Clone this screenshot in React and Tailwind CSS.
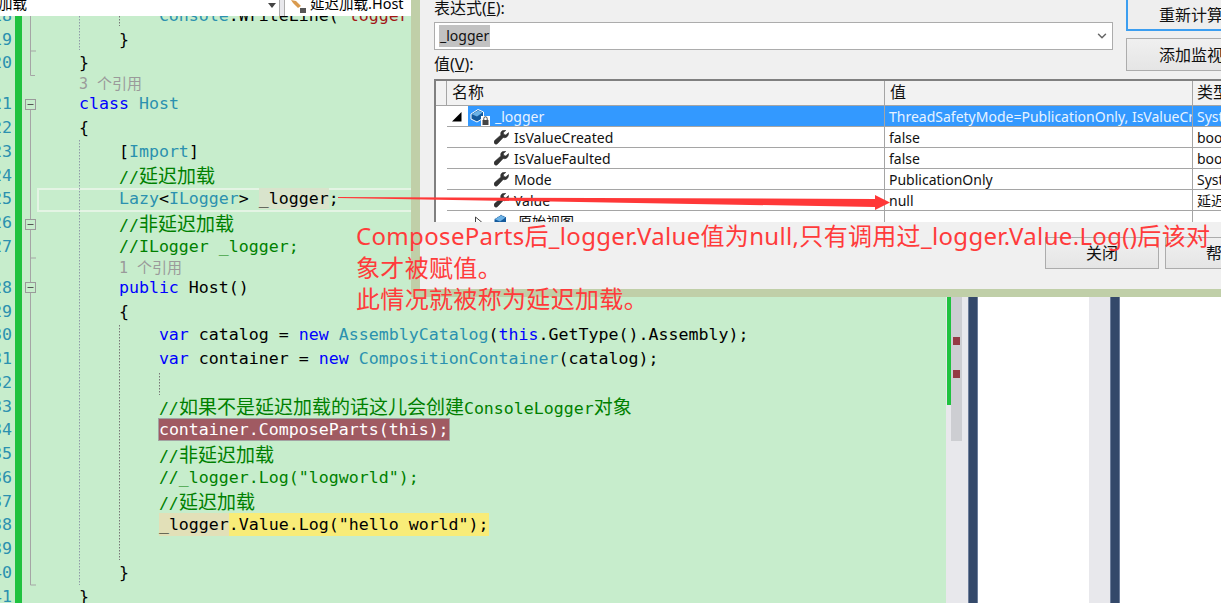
import React from "react";
import { ChevronDown } from "lucide-react";

const CJK = '"Noto Sans CJK SC"';
const uiFont = { fontFamily: `"Noto Sans", ${CJK}, sans-serif` };

const rows = [
  { n: "18", code: [["t", "            Console"], ["p", ".WriteLine("], ["s", '"logger"']] },
  { n: "19", code: [["p", "        }"]] },
  { n: "20", code: [["p", "    }"]] },
  { lens: "3 个引用", pad: "pl-[42px]" },
  { n: "21", code: [["k", "    class"], ["p", " "], ["t", "Host"]] },
  { n: "22", code: [["p", "    {"]] },
  { n: "23", code: [["p", "        ["], ["t", "Import"], ["p", "]"]] },
  { n: "24", code: [["c", "        //"], ["z", "延迟加载"]] },
  { n: "25", current: true, code: [["t", "        Lazy"], ["p", "<"], ["t", "ILogger"], ["p", "> "], ["w", "_logger"], ["p", ";"]] },
  { n: "26", code: [["c", "        //"], ["z", "非延迟加载"]] },
  { n: "27", code: [["c", "        //ILogger _logger;"]] },
  { lens: "1 个引用", pad: "pl-[82px]" },
  { n: "28", code: [["k", "        public"], ["p", " Host()"]] },
  { n: "29", code: [["p", "        {"]] },
  { n: "30", code: [["k", "            var"], ["p", " catalog = "], ["k", "new"], ["p", " "], ["t", "AssemblyCatalog"], ["p", "("], ["k", "this"], ["p", ".GetType().Assembly);"]] },
  { n: "31", code: [["k", "            var"], ["p", " container = "], ["k", "new"], ["p", " "], ["t", "CompositionContainer"], ["p", "(catalog);"]] },
  { n: "32", code: [] },
  { n: "33", code: [["c", "            //"], ["z", "如果不是延迟加载的话这儿会创建"], ["c", "ConsoleLogger"], ["z", "对象"]] },
  { n: "34", code: [["p", "            "], ["b", "container.ComposeParts(this);"]] },
  { n: "35", code: [["c", "            //"], ["z", "非延迟加载"]] },
  { n: "36", code: [["c", '            //_logger.Log("logworld");']] },
  { n: "37", code: [["c", "            //"], ["z", "延迟加载"]] },
  { n: "38", code: [["p", "            "], ["x", "_logger"], ["y", '.Value.Log("hello world");']] },
  { n: "39", code: [] },
  { n: "40", code: [["p", "        }"]] },
  { n: "41", code: [["p", "    }"]] },
];

const tokenClass = {
  k: "text-[#0000ff]",
  t: "text-[#2b91af]",
  p: "text-[#000000]",
  s: "text-[#a31515]",
  c: "text-[#008000]",
  z: "text-[#008000] text-[19px]",
  w: "inline-block h-[21px] leading-[21px] bg-[#d9e4cc] text-black",
  b: "inline-block h-[23px] leading-[21px] bg-[#a05a62] border border-[#a3a3a3] -mx-px text-white",
  x: "inline-block h-[23px] leading-[23px] bg-[#e2e0b8] text-black",
  y: "inline-block h-[23px] leading-[23px] bg-[#f8ec78] text-black",
};

const rowHeight = (r) => (r.lens ? "h-[17.25px]" : "h-[23.75px]");

function CodeRow({ row }) {
  if (row.lens) {
    return (
      <div className={`h-[17.25px] flex items-center whitespace-pre text-[#9a9a9a] text-[15px] ${row.pad}`}>
        {row.lens}
      </div>
    );
  }
  return (
    <div className={`h-[23.75px] flex items-center whitespace-pre ${row.current ? "border-y-2 border-l-2 border-[#e4f4e4]" : "pl-[2px]"}`}>
      <span>
        {row.code.map(([kind, text], i) => (
          <span key={i} className={tokenClass[kind]} style={kind === "z" ? { fontFamily: CJK } : undefined}>
            {text}
          </span>
        ))}
      </span>
    </div>
  );
}

function FoldMargin() {
  const box = (y) => (
    <g key={y}>
      <rect x="3.5" y={y} width="10" height="10" fill="#c7edcc" stroke="#9a9a9a" />
      <line x1="5.5" x2="11.5" y1={y + 5} y2={y + 5} stroke="#555" />
    </g>
  );
  return (
    <svg width="15" height="587" className="shrink-0 block">
      <path d="M8.5 0V59.5H13M8.5 59.5" stroke="#a5a5a5" fill="none" />
      <path d="M8.5 35H14" stroke="#a5a5a5" fill="none" />
      <path d="M8.5 94V569H14" stroke="#a5a5a5" fill="none" />
      <path d="M8.5 242H14" stroke="#a5a5a5" fill="none" />
      {[83.5, 203.5, 266.5].map(box)}
    </svg>
  );
}

function Wrench({ className = "" }) {
  return (
    <svg width="15" height="15" viewBox="0 0 15 15" className={`shrink-0 ${className}`}>
      <path d="M14.5 2.6 11.8 5 9.8 4.4 9.4 2.6 11.8.4C9.8-.3 7.6.6 6.9 2.4c-.3.9-.3 1.7 0 2.5L.6 10.6c-.8.8-.8 2 0 2.9.9.9 2.2.8 3 0l5.6-6c.9.3 1.9.3 2.8-.1 1.8-.8 2.7-2.8 2.5-4.8z" fill="#333" stroke="#333" strokeWidth="0.6" />
    </svg>
  );
}

function ObjectIcon({ lock = true }) {
  return (
    <svg width="20" height="20" viewBox="0 0 20 20" className="shrink-0">
      <g transform="translate(0 2.5)">
        <path d="M1 5.5 8 1l5.5 2.5v6L7 13.5 1 10.5z" fill="#155a9c" stroke="#fff" strokeWidth="1" strokeLinejoin="round" />
        <path d="M2 5.7 8 2l4.5 2L7 8z" fill="#6cb2e6" />
      </g>
      {lock && (
        <g>
          <rect x="11" y="10" width="9" height="10" fill="#fff" />
          <rect x="12.5" y="14" width="6" height="5" fill="#444" />
          <path d="M13.8 14V12.5a1.7 1.7 0 0 1 3.4 0V14" fill="none" stroke="#444" />
        </g>
      )}
    </svg>
  );
}

function TreeRow({ name, value, type, selected, children, indent }) {
  const selectedText = selected ? "bg-[#3399ff] text-[#e8f3ff]" : "";
  return (
    <div className="flex h-[21px] pl-[11px]">
      <div className="flex flex-1 border-b border-[#a5a5a5]">
        <div className={`w-[437px] shrink-0 flex items-center ${indent}`}>
          {children}
          <div className={`flex-1 h-full flex items-center ${selectedText}`}>{name}</div>
        </div>
        <div className={`w-[308px] shrink-0 overflow-hidden whitespace-nowrap pl-[4px] border-l border-[#a5a5a5] leading-[22px] ${selectedText}`}>{value}</div>
        <div className={`flex-1 overflow-hidden whitespace-nowrap pl-[4px] border-l border-[#a5a5a5] leading-[22px] ${selectedText}`}>{type}</div>
      </div>
    </div>
  );
}

function WatchDialog() {
  return (
    <div className="absolute left-[411px] top-0 w-[810px] h-[297px] overflow-hidden bg-[#f0f0f0] border-l-[9px] border-b-[8px] border-[#c0cfa8] text-[14px] text-[#111]" style={uiFont}>
      <div className="flex h-[79px] pl-[14px] gap-[13px]">
        <div className="w-[679px] shrink-0">
          <div className="h-[16px] leading-[16px] text-[16px]">表达式(<span className="underline">E</span>):</div>
          <div className="mt-[6px] h-[28px] bg-white border border-[#acacac] flex items-center justify-between pl-[4px] pr-[3px]">
            <span className="bg-[#c2c2c2] h-[22px] leading-[21px] px-[1px] text-[14px]">_logger</span>
            <ChevronDown size={14} strokeWidth={2.5} className="text-[#666]" />
          </div>
          <div className="mt-[6px] h-[16px] leading-[16px] text-[16px]">值(<span className="underline">V</span>):</div>
        </div>
        <div className="w-[130px] shrink-0 text-[16px]">
          <div className="h-[31px] border-2 border-[#3c9ef0] border-t-0 bg-[#eeeeee] flex items-end justify-center pb-[2px] whitespace-nowrap">重新计算</div>
          <div className="mt-[7px] h-[33px] border border-[#acacac] bg-gradient-to-b from-[#f0f0f0] to-[#e5e5e5] flex items-center justify-center whitespace-nowrap">添加监视</div>
        </div>
      </div>
      <div className="ml-[14px] h-[143px] overflow-hidden bg-white border-t-2 border-l-2 border-[#808080]">
        <div className="flex h-[25px] border-b border-[#a5a5a5] bg-[#f2f2f2] text-[16px] leading-[23px]">
          <div className="w-[11px] shrink-0 border-r border-[#a5a5a5]" />
          <div className="w-[437px] shrink-0 pl-[5px]">名称</div>
          <div className="w-[308px] shrink-0 pl-[5px] border-l border-[#a5a5a5]">值</div>
          <div className="flex-1 pl-[4px] border-l border-[#a5a5a5] overflow-hidden whitespace-nowrap">类型</div>
        </div>
        <TreeRow selected name="_logger" indent="pl-[5px]" value="ThreadSafetyMode=PublicationOnly, IsValueCreated=False" type="System.Lazy">
          <svg width="16" height="21" viewBox="0 0 16 21" className="shrink-0">
            <path d="M0 15.5 9.5 6v9.5z" fill="#000" />
          </svg>
          <div className="h-full flex items-center pl-[2px] pr-[5px] bg-[#3399ff]"><ObjectIcon /></div>
        </TreeRow>
        <TreeRow name={<span className="pl-[5px]">IsValueCreated</span>} indent="pl-[47px]" value="false" type="bool"><Wrench /></TreeRow>
        <TreeRow name={<span className="pl-[5px]">IsValueFaulted</span>} indent="pl-[47px]" value="false" type="bool"><Wrench /></TreeRow>
        <TreeRow name={<span className="pl-[5px]">Mode</span>} indent="pl-[47px]" value="PublicationOnly" type="System.Threading"><Wrench /></TreeRow>
        <TreeRow name={<span className="pl-[5px]">Value</span>} indent="pl-[47px]" value="null" type="延迟加载.ILogger"><Wrench /></TreeRow>
        <TreeRow name={<span className="pl-[5px]">原始视图</span>} indent="pl-[28px]" value="" type="">
          <svg width="18" height="21" viewBox="0 0 18 21" className="shrink-0">
            <path d="M0.5 6 6.5 11 .5 15.5z" fill="#fff" stroke="#444" />
          </svg>
          <ObjectIcon lock={false} />
        </TreeRow>
      </div>
      <div className="mt-[15px] ml-[625px] flex gap-[6px] text-[16px]">
        <div className="w-[114px] h-[32px] shrink-0 border border-[#acacac] bg-gradient-to-b from-[#f0f0f0] to-[#e5e5e5] flex items-center justify-center">关闭</div>
        <div className="w-[114px] h-[32px] shrink-0 border border-[#acacac] bg-gradient-to-b from-[#f0f0f0] to-[#e5e5e5] flex items-center justify-center">帮助</div>
      </div>
    </div>
  );
}

export default function App() {
  return (
    <div className="relative w-[1221px] h-[603px] overflow-hidden bg-white">
      {/* navigation bar */}
      <div className="h-[16px] flex bg-[#e8e8ec] overflow-hidden text-[14.5px] text-black" style={uiFont}>
        <div className="w-[280px] shrink-0 bg-white border-r border-[#acacac] flex items-start relative">
          <div className="w-[27px] -mt-[7px] flex justify-end overflow-hidden whitespace-nowrap">延迟加载</div>
          <svg width="8" height="5" className="absolute left-[268px] top-[3px]"><path d="M0 0H8L4 5z" fill="#444" /></svg>
        </div>
        <div className="w-[4px] shrink-0" />
        <div className="flex-1 bg-white border-l border-[#acacac] flex items-start pl-[5px]">
          <svg width="18" height="14" viewBox="0 0 18 14" className="shrink-0">
            <path d="M1 0 6 1 9 4 6 6 3 3zM6 6l3-2 2 2-3 2z" fill="#d99a4e" />
            <rect x="10" y="8" width="6" height="5" fill="#555" />
          </svg>
          <span className="-mt-[7px] ml-[2px] whitespace-nowrap">延迟加载.Host</span>
        </div>
      </div>

      {/* editor */}
      <div className="flex h-[587px] overflow-hidden">
        <div className="relative flex w-[946px] shrink-0 bg-[#c7edcc] overflow-hidden text-[16.6px]" style={{ fontFamily: `"DejaVu Sans Mono", ${CJK}, monospace` }}>
          <div className="w-[12px] shrink-0 -mt-[11.6px] text-[#2b91af]">
            {rows.map((r, i) => (
              <div key={i} className={`${rowHeight(r)} flex items-center justify-end overflow-hidden whitespace-nowrap`}>{r.n}</div>
            ))}
          </div>
          <div className="w-[3px] shrink-0" />
          <div className="w-[7px] shrink-0 bg-[#1fc23f]" />
          <FoldMargin />
          <div className="flex-1 min-w-0 -mt-[11.6px]">
            {rows.map((r, i) => <CodeRow key={i} row={r} />)}
          </div>
          <svg width="130" height="587" className="absolute left-[60px] top-0">
            <path d="M19.5 0V34M19.5 124V569" stroke="#8f9aa8" strokeDasharray="1.5 1.5" fill="none" />
            <path d="M59.5 0V10M59.5 309V544" stroke="#777" strokeDasharray="1.5 1.5" fill="none" />
            <path d="M99.5 357V379" stroke="#777" strokeDasharray="1.5 1.5" fill="none" />
          </svg>
        </div>

        {/* scroll bar with change and error marks */}
        <div className="w-[22px] shrink-0 bg-[#e8e8ec] pt-[281px] pl-[1px] flex items-start">
          <div className="w-[5px] h-[108px] bg-[#1fc23f] shrink-0" />
          <div className="w-[11px] h-[144px] -ml-px bg-[#cdced2] shrink-0 pl-[2px] pt-[40px]">
            <div className="w-[7px] h-[8px] bg-[#943a44]" />
            <div className="mt-[25px] w-[7px] h-[8px] bg-[#943a44]" />
          </div>
        </div>
        <div className="w-[10px] shrink-0 bg-[#34496a] border-x border-[#6c7d9a]" />
        <div className="w-[111px] shrink-0 bg-white" />
        <div className="w-[21px] shrink-0 bg-[#e8e8ec]" />
        <div className="w-[10px] shrink-0 bg-[#34496a] border-x border-[#6c7d9a]" />
        <div className="flex-1 bg-white" />
      </div>

      <WatchDialog />

      {/* red annotation drawn on top of the screenshot */}
      <svg width="560" height="24" className="absolute left-[335px] top-[190px]">
        <path d="M3 7 540 9 540 5 555 12.5 540 20 540 17 3 8z" fill="#ff3838" />
      </svg>
      <div className="absolute left-[356px] top-[220px] w-[865px] text-[24px] leading-[31.5px] tracking-[0.33px] text-[#ff3b3b] whitespace-nowrap" style={uiFont}>
        <div>ComposeParts后_logger.Value值为null,只有调用过_logger.Value.Log()后该对</div>
        <div>象才被赋值。</div>
        <div>此情况就被称为延迟加载。</div>
      </div>
    </div>
  );
}
